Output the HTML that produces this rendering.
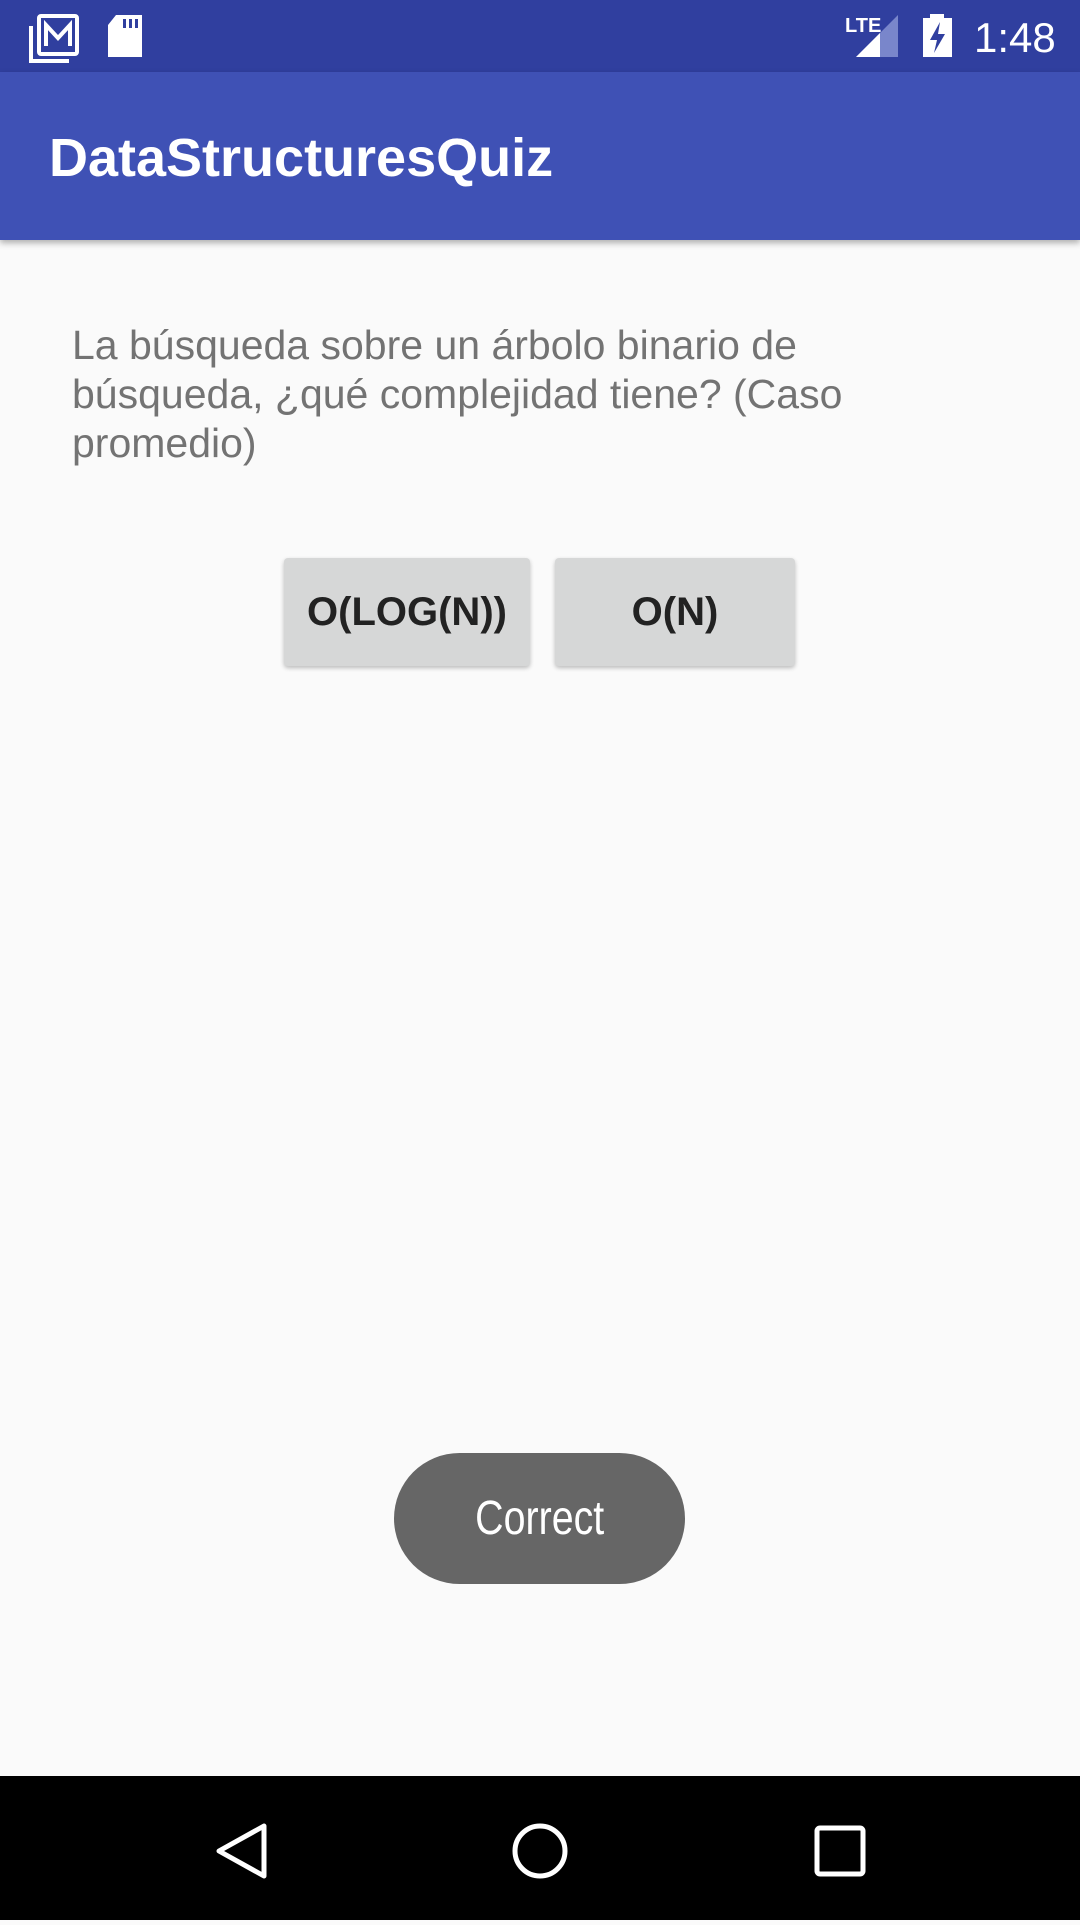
<!DOCTYPE html>
<html><head><meta charset="utf-8"><style>
*{margin:0;padding:0;box-sizing:border-box}
body{width:1080px;height:1920px;background:#fafafa;font-family:"Liberation Sans",sans-serif;position:relative;overflow:hidden}
.sb{position:absolute;left:0;top:0;width:1080px;height:72px;background:#303f9f}
.ab{position:absolute;left:0;top:72px;width:1080px;height:168px;background:#3f51b5;box-shadow:0 3px 6px rgba(0,0,0,.3)}
.ab span{position:absolute;left:49px;top:55px;color:#fff;font-size:54px;font-weight:bold}
.q{position:absolute;left:72px;top:321px;width:820px;color:#737373;font-size:41px;line-height:49px}
.btn{position:absolute;top:558px;height:108px;background:#d6d7d7;border-radius:4px;box-shadow:0 2px 4px rgba(0,0,0,.25);font-weight:bold;font-size:40px;color:#222;display:flex;align-items:center;justify-content:center}
.toast{position:absolute;left:394px;top:1453px;width:291px;height:131px;border-radius:66px;background:#666;color:#fff;font-size:48px;display:flex;align-items:center;justify-content:center}
.nav{position:absolute;left:0;top:1776px;width:1080px;height:144px;background:#000}
</style></head><body>
<div class="sb">
<svg width="1080" height="72" style="position:absolute;left:0;top:0">
<g fill="none" stroke="#fff" stroke-width="4">
<rect x="39" y="16" width="38" height="38" rx="2"/>
<polyline points="31,26 31,61 69,61"/>
</g>
<polyline points="46,46 46,25 58,38 70,25 70,46" fill="none" stroke="#fff" stroke-width="4"/>
<path d="M116 15 H142 V57 H108 V25 Z" fill="#fff"/>
<rect x="123" y="19" width="3" height="9" fill="#303f9f"/><rect x="129" y="19" width="3" height="9" fill="#303f9f"/><rect x="135" y="19" width="3" height="9" fill="#303f9f"/>
<text x="845" y="32" fill="#fff" font-size="20" font-weight="bold" font-family="Liberation Sans Narrow,Liberation Sans">LTE</text>
<path d="M856 57 L898 15 V57 Z" fill="#7986cb"/>
<path d="M856 57 L880 33 V57 Z" fill="#fff"/>
<rect x="930" y="14" width="14" height="5" fill="#fff"/>
<rect x="923" y="18" width="29" height="39" fill="#fff"/>
<path d="M940 22 L930 40 H937 L934 53 L945 34 H938 Z" fill="#303f9f"/>
<text x="974" y="52" fill="#fff" font-size="42">1:48</text>
</svg>
</div>
<div class="ab"><span>DataStructuresQuiz</span></div>
<div class="q">La búsqueda sobre un árbolo binario de búsqueda, ¿qué complejidad tiene? (Caso promedio)</div>
<div class="btn" style="left:284px;width:246px">O(LOG(N))</div>
<div class="btn" style="left:555px;width:240px">O(N)</div>
<div class="toast"><span style="display:inline-block;transform:scaleX(.82)">Correct</span></div>
<div class="nav">
<svg width="1080" height="144">
<path d="M264 50 L219 75 L264 100 Z" fill="none" stroke="#fff" stroke-width="5" stroke-linejoin="round"/>
<circle cx="540" cy="75" r="25" fill="none" stroke="#fff" stroke-width="5"/>
<rect x="817" y="52" width="46" height="46" rx="3" fill="none" stroke="#fff" stroke-width="5"/>
</svg>
</div>
</body></html>
